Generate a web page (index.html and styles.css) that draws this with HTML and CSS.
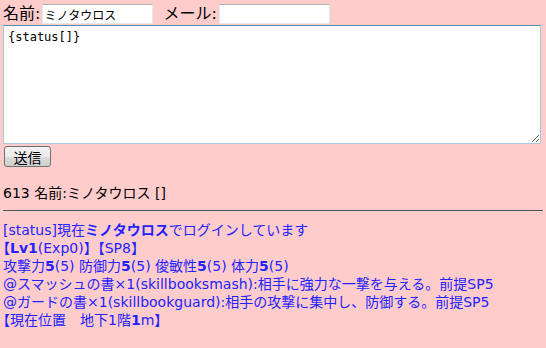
FILE: index.html
```html
<!DOCTYPE html>
<html lang="ja">
<head>
    <meta charset="UTF-8">
    <title>ステータス</title>
    <link rel="stylesheet" href="styles.css">
</head>
<body>
    <form class="post-form">
        <div class="field-row">
            <label for="name">名前:</label>
            <input type="text" id="name" class="text-input" value="ミノタウロス">
            <label for="mail" class="mail-label">メール:</label>
            <input type="text" id="mail" class="text-input">
        </div>
        <textarea class="message">{status[]}</textarea>
        <button type="button" class="send">送信</button>
    </form>

    <p class="post-head">613 名前:ミノタウロス []</p>
    <hr class="divider">

    <div class="status">
        <div>[status]現在<b>ミノタウロス</b>でログインしています</div>
        <div><b>【Lv1</b>(Exp0)】【SP8】</div>
        <div>攻撃力<b>5</b>(5) 防御力<b>5</b>(5) 俊敏性<b>5</b>(5) 体力<b>5</b>(5)</div>
        <div>@スマッシュの書×1(skillbooksmash):相手に強力な一撃を与える。前提SP5</div>
        <div>@ガードの書×1(skillbookguard):相手の攻撃に集中し、防御する。前提SP5</div>
        <div>【現在位置　地下1階<b>1</b>m】</div>
    </div>
</body>
</html>
```

FILE: styles.css
```css
body {
    margin: 0;
    padding: 3px 3px 0 3px;
    background-color: #ffcccc;
    font-family: "DejaVu Sans", "Noto Sans CJK JP", sans-serif;
    color: #000;
}
.post-form {
    margin: 0;
}
.field-row {
    display: flex;
    align-items: center;
    height: 22px;
    font-size: 16px;
}
.field-row label {
    line-height: 20px;
}
.mail-label {
    margin-left: 10px;
}
.text-input {
    width: 107px;
    height: 16px;
    margin: 0 0 0 2px;
    padding: 1px 1px;
    border: 1px solid #e3e9ef;
    border-top-color: #abadb3;
    background: #fff;
    font-family: "Noto Sans CJK JP", sans-serif;
    font-size: 12px;
}
.message {
    display: block;
    box-sizing: border-box;
    width: 538px;
    height: 119px;
    margin: 0;
    padding: 3px 4px;
    border: 1px solid #a8c7e2;
    border-top-color: #5d8bb8;
    background: #fff;
    font-family: "DejaVu Sans Mono", monospace;
    font-size: 12px;
    line-height: 16px;
    resize: both;
}
.send {
    display: block;
    width: 47px;
    height: 21px;
    margin: 2px 0 0 1px;
    padding: 0;
    border: 1px solid #707070;
    border-radius: 3px;
    background: linear-gradient(#f2f2f2, #ebebeb 50%, #dddddd 51%, #cfcfcf);
    font-family: "Noto Sans CJK JP", sans-serif;
    font-size: 14px;
    line-height: 18px;
}
.post-head {
    margin: 16px 0 0 0;
    font-size: 14px;
    line-height: 20px;
}
.divider {
    margin: 7px 0 0 0;
    border: none;
    border-top: 1px solid #555;
    height: 0;
}
.status {
    margin-top: 10px;
    color: #2222ff;
    font-size: 14px;
    line-height: 18px;
    text-spacing-trim: trim-start;
}
.status b {
    font-weight: bold;
}
```
